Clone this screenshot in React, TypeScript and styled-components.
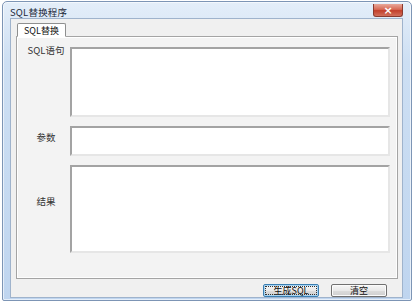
import styled, { createGlobalStyle } from 'styled-components';

const GlobalStyle = createGlobalStyle`
	html, body {
		margin: 0;
		padding: 0;
		background: #ffffff;
	}
	body {
		font-family: 'Noto Sans CJK SC', 'Liberation Sans', sans-serif;
	}
`;

interface FieldProps {
	label: string;
	height: number;
	labelOffset: number;
}

const Field = ({ label, height, labelOffset }: FieldProps) => (
	<>
		<Label $offset={labelOffset}>{label}</Label>
		<TextBox $height={height} />
	</>
);

const App = () => {
	return (
		<>
			<GlobalStyle />
			<Window>
				<TitleBar>
					<Title>SQL替换程序</Title>
					<CloseBtn>×</CloseBtn>
				</TitleBar>
				<Client>
					<TabStrip>
						<Tab>SQL替换</Tab>
					</TabStrip>
					<TabPanel>
						<Field label='SQL语句' height={70} labelOffset={-3} />
						<Field label='参数' height={30} labelOffset={5} />
						<Field label='结果' height={88} labelOffset={30} />
					</TabPanel>
					<ButtonRow>
						<Button $focused>生成SQL</Button>
						<Button>清空</Button>
					</ButtonRow>
				</Client>
			</Window>
		</>
	);
};

export default App;

const Window = styled.div`
	margin: 1px 0 0 2px;
	width: 410px;
	height: 300px;
	box-sizing: border-box;
	display: flex;
	flex-direction: column;
	border: 1px solid #7d95b5;
	border-radius: 5px 5px 2px 2px;
	background: linear-gradient(180deg, #e4eef9 0%, #cddff3 20%, #bfd5ef 100%);
	box-shadow: inset 0 0 0 1px rgba(255, 255, 255, 0.6);
	padding: 0 8px 4px 7px;
`;

const TitleBar = styled.div`
	height: 16px;
	display: flex;
	align-items: center;
	justify-content: space-between;
`;

const Title = styled.span`
	font-size: 9.5px;
	color: #1e2a3a;
	margin-top: 3px;
	letter-spacing: 0.2px;
`;

const CloseBtn = styled.div`
	width: 30px;
	height: 13px;
	margin-top: 1px;
	box-sizing: border-box;
	display: flex;
	align-items: center;
	justify-content: center;
	color: #ffffff;
	font-family: 'DejaVu Sans', sans-serif;
	font-size: 11px;
	font-weight: bold;
	line-height: 1;
	border: 1px solid #8a3a2e;
	border-top: none;
	border-radius: 0 0 3px 3px;
	background: linear-gradient(180deg, #e8a89a 0%, #d86a55 45%, #c2402c 55%, #d2705c 100%);
`;

const Client = styled.div`
	flex: 1;
	display: flex;
	flex-direction: column;
	background: #f0f0f0;
	border: 1px solid #9fb3cc;
	padding: 4px 4px 0 5px;
`;

const TabStrip = styled.div`
	display: flex;
	padding-left: 1px;
	position: relative;
	z-index: 1;
	margin-bottom: -1px;
`;

const Tab = styled.div`
	height: 12px;
	padding: 0 6px;
	min-width: 30px;
	display: flex;
	align-items: center;
	justify-content: center;
	font-size: 9px;
	color: #111;
	background: #ffffff;
	border: 1px solid #8e8f8f;
	border-bottom: 1px solid #ffffff;
	border-radius: 2px 2px 0 0;
`;

const TabPanel = styled.div`
	height: 243px;
	box-sizing: border-box;
	display: grid;
	grid-template-columns: 48px 1fr;
	grid-template-rows: 70px 30px 88px;
	row-gap: 9px;
	align-content: start;
	padding: 10px 7px 0 5px;
	background: #f3f3f3;
	border: 1px solid #a4a4a4;
	box-shadow: inset 1px 1px 0 #ffffff, inset -1px -1px 0 #fdfdfd;
`;

const Label = styled.div<{ $offset: number }>`
	font-size: 9.5px;
	line-height: 12px;
	color: #333;
	text-align: center;
	margin-top: ${(p) => p.$offset}px;
	white-space: nowrap;
`;

const TextBox = styled.div<{ $height: number }>`
	height: ${(p) => p.$height}px;
	box-sizing: border-box;
	background: #ffffff;
	border-style: solid;
	border-width: 2px;
	border-color: #a3a3a3 #e6e6e6 #e6e6e6 #a3a3a3;
`;

const ButtonRow = styled.div`
	display: flex;
	justify-content: flex-end;
	gap: 12px;
	padding: 5px 11px 0 0;
`;

const Button = styled.div<{ $focused?: boolean }>`
	width: 56px;
	height: 13px;
	box-sizing: border-box;
	display: flex;
	align-items: center;
	justify-content: center;
	font-size: 9px;
	color: #111;
	border-radius: 2px;
	border: 1px solid ${(p) => (p.$focused ? '#3c7fb1' : '#707070')};
	background: linear-gradient(180deg, #f6f6f6 0%, #e9e9e9 50%, #dcdcdc 51%, #cfcfcf 100%);
	outline: ${(p) => (p.$focused ? '1px dotted #333' : 'none')};
	outline-offset: -3px;
	box-shadow: ${(p) => (p.$focused ? 'inset 0 0 0 1px #a6d4f5' : 'inset 0 0 0 1px #fbfbfb')};
`;
